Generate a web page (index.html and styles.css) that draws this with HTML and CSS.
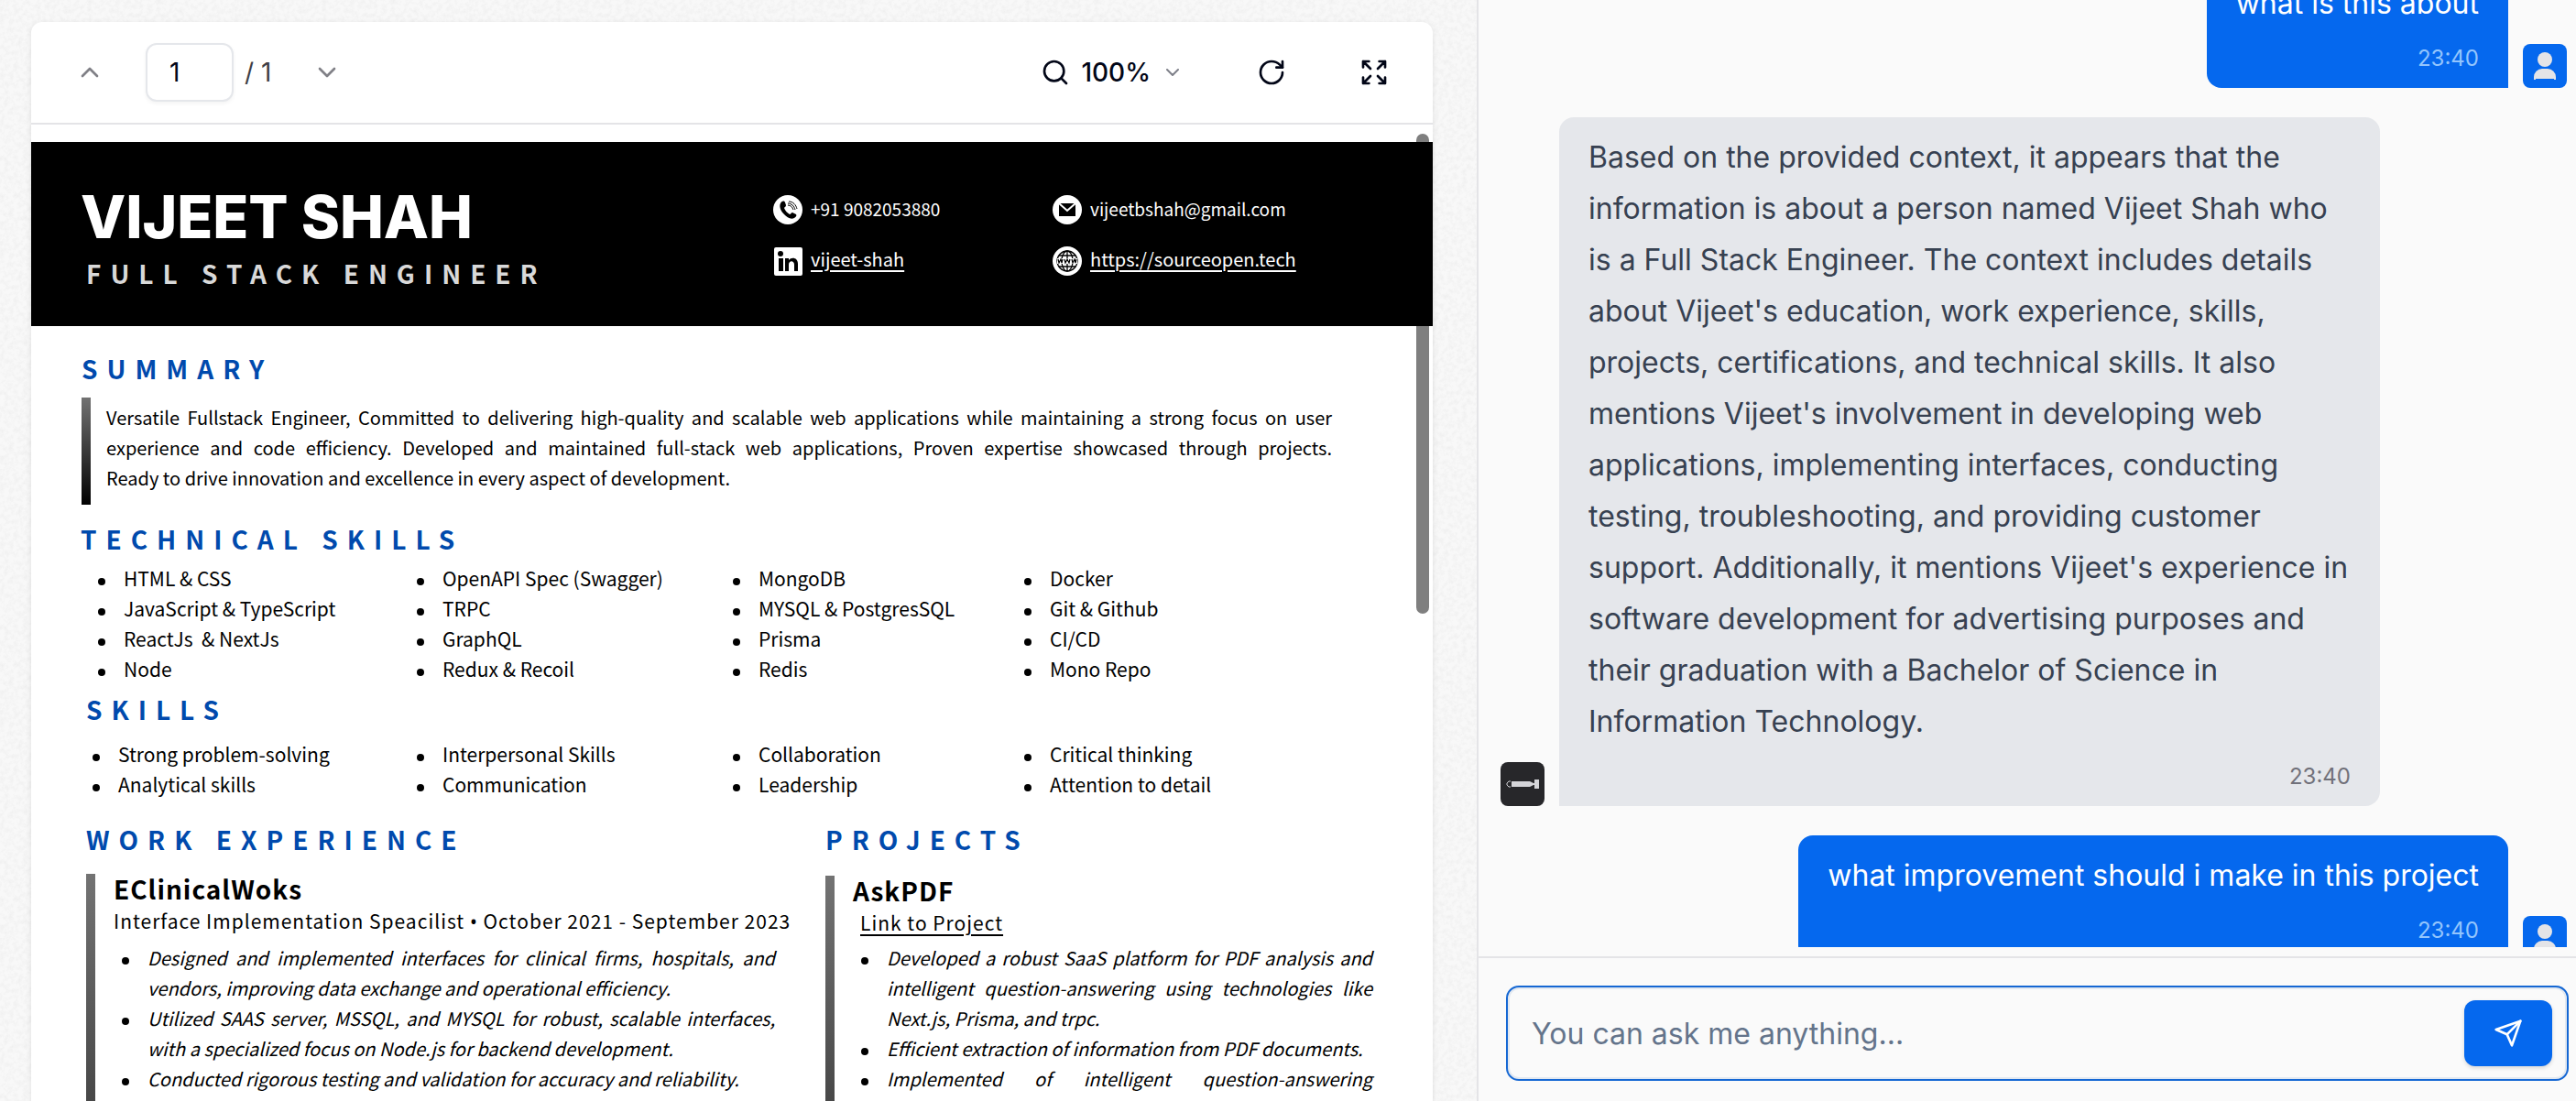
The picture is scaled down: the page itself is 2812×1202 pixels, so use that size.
FILE: index.html
```html
<!DOCTYPE html>
<html lang="en">
<head>
<meta charset="utf-8">
<title>AskPDF</title>
<link rel="stylesheet" href="styles.css">
</head>
<body>
<div class="app">
  <main class="viewer">
    <div class="viewer-card">
      <div class="toolbar">
        <div class="pager">
          <button class="icon-button muted" type="button" aria-label="Previous page"><svg class="icon" viewBox="0 0 24 24"><path d="m18 15-6-6-6 6"/></svg></button>
          <div class="page-field">
            <input class="page-input" id="page" type="text" value="1" aria-label="Page number">
            <label class="page-total" for="page"><span>/</span><span>1</span></label>
          </div>
          <button class="icon-button muted" type="button" aria-label="Next page"><svg class="icon" viewBox="0 0 24 24"><path d="m6 9 6 6 6-6"/></svg></button>
        </div>
        <div class="tools">
          <button class="zoom-button" type="button" aria-label="Zoom">
            <svg class="icon" viewBox="0 0 24 24"><circle cx="11" cy="11" r="8"/><path d="m21 21-4-4"/></svg>
            <span>100%</span>
            <svg class="icon icon-small" viewBox="0 0 24 24"><path d="m6 9 6 6 6-6"/></svg>
          </button>
          <button class="icon-button" type="button" aria-label="Rotate"><svg class="icon" viewBox="0 0 24 24"><path d="M21 12a9 9 0 1 1-9-9c2.52 0 4.93 1 6.74 2.74L21 8"/><path d="M21 3v5h-5"/></svg></button>
          <button class="icon-button" type="button" aria-label="Fullscreen"><svg class="icon" viewBox="0 0 24 24"><path d="m21 21-6-6m6 6v-4.800m0 4.800h-4.800M3 16.200V21m0 0h4.800M3 21l6-6M21 7.800V3m0 0h-4.800M21 3l-6 6M3 7.800V3m0 0h4.800M3 3l6 6"/></svg></button>
        </div>
      </div>
      <div class="document">
        <div class="scroll-thumb"></div>
        <article class="resume">
          <header class="resume-header">
            <div class="identity">
              <h1 class="name">VIJEET SHAH</h1>
              <p class="role">FULL STACK ENGINEER</p>
            </div>
            <ul class="contacts">
              <li class="contact">
                <svg class="badge" viewBox="0 0 32 32"><circle cx="16" cy="16" r="16" fill="#fff"/><path d="M8 9c2-3 4-3 5-1l1 3c0 2-2 2-2 3 1 3 3 5 6 7 1 0 2-2 3-2l4 2c1 1 0 3-2 4-4 2-8-1-11-4S6 13 8 9z" fill="#000"/><path d="M16 11c3 0 5 2 6 5M16 9c4 0 7 3 8 7M17 7c5 0 8 4 9 8" fill="none" stroke="#000" stroke-width="1"/></svg>
                <span>+91 9082053880</span>
              </li>
              <li class="contact">
                <svg class="badge" viewBox="0 0 32 32"><circle cx="16" cy="16" r="16" fill="#fff"/><path d="M7 9h18v14H7z" fill="#000"/><path d="M7 9l9 8 9-8" fill="none" stroke="#fff" stroke-width="2"/></svg>
                <span>vijeetbshah@gmail.com</span>
              </li>
              <li class="contact">
                <svg class="badge" viewBox="0 0 32 32"><rect x="1" y="1" width="31" height="31" rx="2" fill="#fff"/><circle cx="8" cy="8" r="3" fill="#000"/><path d="M6 13h5v14H6zM13 13h4v2c3-4 10-3 10 4v8h-4v-7c0-5-6-5-6 0v7h-4z" fill="#000"/></svg>
                <a href="#linkedin">vijeet-shah</a>
              </li>
              <li class="contact">
                <svg class="badge" viewBox="0 0 32 32"><circle cx="16" cy="16" r="16" fill="#fff"/><g fill="none" stroke="#000" stroke-width="1.300"><circle cx="16" cy="16" r="11"/><ellipse cx="16" cy="16" rx="6" ry="11"/><path d="M16 5v22M7 10h18M7 22h18"/></g><path d="M5 13h22v6H5z" fill="#fff"/><path d="M6 14l1 4 2-4 1 4 1-4M13 14l1 4 2-4 2 4 1-4M21 14l1 4 2-4 1 4 1-4" fill="none" stroke="#000" stroke-width="1.200"/></svg>
                <a href="#site">https://sourceopen.tech</a>
              </li>
            </ul>
          </header>

          <section class="summary">
            <h2 class="heading">SUMMARY</h2>
            <p class="summary-text">Versatile Fullstack Engineer, Committed to delivering high-quality and scalable web applications while maintaining a strong focus on user experience and code efficiency. Developed and maintained full-stack web applications, Proven expertise showcased through projects. Ready&nbsp;to&nbsp;drive innovation and excellence in every aspect of development.</p>
          </section>

          <section class="tech">
            <h2 class="heading">TECHNICAL SKILLS</h2>
            <div class="skill-grid">
              <ul class="bullets"><li>HTML &amp; CSS</li><li>JavaScript &amp; TypeScript</li><li>ReactJs &nbsp;&amp; NextJs</li><li>Node</li></ul>
              <ul class="bullets"><li>OpenAPI Spec (Swagger)</li><li>TRPC</li><li>GraphQL</li><li>Redux &amp; Recoil</li></ul>
              <ul class="bullets"><li>MongoDB</li><li>MYSQL &amp; PostgresSQL</li><li>Prisma</li><li>Redis</li></ul>
              <ul class="bullets"><li>Docker</li><li>Git &amp; Github</li><li>CI/CD</li><li>Mono Repo</li></ul>
            </div>
          </section>

          <section class="soft">
            <h2 class="heading indent">SKILLS</h2>
            <div class="skill-grid">
              <ul class="bullets outdent"><li>Strong problem-solving</li><li>Analytical skills</li></ul>
              <ul class="bullets"><li>Interpersonal Skills</li><li>Communication</li></ul>
              <ul class="bullets"><li>Collaboration</li><li>Leadership</li></ul>
              <ul class="bullets"><li>Critical thinking</li><li>Attention to detail</li></ul>
            </div>
          </section>

          <div class="columns">
            <section class="work">
              <h2 class="heading">WORK EXPERIENCE</h2>
              <div class="entry">
                <h3 class="entry-title">EClinicalWoks</h3>
                <p class="entry-meta">Interface Implementation Speacilist <span class="dot">•</span> October 2021 - September 2023</p>
                <ul class="bullets details">
                  <li>Designed and implemented interfaces for clinical firms, hospitals, and vendors, improving data exchange and operational efficiency.</li>
                  <li>Utilized SAAS server, MSSQL, and MYSQL for robust, scalable interfaces, with a specialized focus on Node.js for backend development.</li>
                  <li>Conducted rigorous testing and validation for accuracy and reliability.</li>
                  <li>Enabled business efforts for ticketing and sales data.</li>
                </ul>
              </div>
            </section>
            <section class="projects">
              <h2 class="heading">PROJECTS</h2>
              <div class="entry">
                <h3 class="entry-title">AskPDF</h3>
                <p class="entry-meta inset"><a href="#project">Link to Project</a></p>
                <ul class="bullets details">
                  <li>Developed a robust SaaS platform for PDF analysis and intelligent question-answering using technologies like Next.js, Prisma, and trpc.</li>
                  <li>Efficient extraction of information from PDF documents.</li>
                  <li>Implemented of intelligent question-answering functionalities&nbsp;for&nbsp;users&nbsp;need.</li>
                </ul>
              </div>
            </section>
          </div>
        </article>
      </div>
    </div>
  </main>

  <aside class="chat">
    <div class="messages">
      <div class="message own">
        <div class="bubble"><p>what is this about</p><time class="time">23:40</time></div>
        <div class="avatar"><svg viewBox="0 0 48 48"><circle cx="24" cy="17" r="8"/><path d="M12 39v-3a9 9 0 0 1 9-9h6a9 9 0 0 1 9 9v3h-2v-1H14v1z"/></svg></div>
      </div>
      <div class="message">
        <div class="avatar dark"><svg viewBox="0 0 48 48"><path d="M12 21h20l4 2h1v-4h5v10h-5v-4h-1l-4 2H12z"/><path d="M11 21H9l-2 2v2l2 2h2" fill="none" stroke="#d4d4d8" stroke-width="1"/></svg></div>
        <div class="bubble"><p>Based on the provided context, it appears that the information is about a person named Vijeet Shah who is a Full Stack Engineer. The context includes details about Vijeet's education, work experience, skills, projects, certifications, and technical skills. It also mentions Vijeet's involvement in developing web applications, implementing interfaces, conducting testing, troubleshooting, and providing customer support. Additionally, it mentions Vijeet's experience in software development for advertising purposes and their graduation with a Bachelor of Science in Information Technology.</p><time class="time">23:40</time></div>
      </div>
      <div class="message own">
        <div class="bubble"><p>what improvement should i make in this project</p><time class="time">23:40</time></div>
        <div class="avatar"><svg viewBox="0 0 48 48"><circle cx="24" cy="17" r="8"/><path d="M12 39v-3a9 9 0 0 1 9-9h6a9 9 0 0 1 9 9v3h-2v-1H14v1z"/></svg></div>
      </div>
    </div>
    <form class="composer">
      <div class="composer-box">
        <input class="composer-input" type="text" placeholder="You can ask me anything..." aria-label="Message">
        <button class="send" type="button" aria-label="Send message"><svg class="icon" viewBox="0 0 24 24"><path d="m22 2-7 20-4-9-9-4Z"/><path d="M22 2 11 13"/></svg></button>
      </div>
    </form>
  </aside>
</div>
</body>
</html>
```

FILE: styles.css
```css
* { box-sizing: border-box; }
body, h1, h2, h3, p, ul { margin: 0; padding: 0; }
ul { list-style: none; }
body { font-family: Inter, "Liberation Sans", sans-serif; color: #020617; background: #fafafa; }
button, input { font: inherit; color: inherit; }
button { border: 0; padding: 0; background: none; }

.app { display: grid; grid-template-columns: minmax(0, 1614fr) minmax(0, 1198fr); grid-template-rows: minmax(0, 1fr); height: 100vh; overflow: hidden; }

.viewer {
  padding: 24px 48px 0 34px;
  border-right: 2px solid #e4e4e7;
  background-color: #f8f8f8;
  background-image: url("data:image/svg+xml,%3Csvg xmlns='http://www.w3.org/2000/svg' width='256' height='256'%3E%3Cfilter id='n'%3E%3CfeTurbulence type='fractalNoise' baseFrequency='.2' numOctaves='3' stitchTiles='stitch'/%3E%3CfeColorMatrix values='0 0 0 0 .5 0 0 0 0 .5 0 0 0 0 .5 .3 0 0 0 -.12'/%3E%3C/filter%3E%3Crect width='256' height='256' filter='url(%23n)'/%3E%3C/svg%3E");
  overflow: hidden;
}
.viewer-card { min-height: 100%; background: #fff; border-radius: 12px 12px 0 0; box-shadow: 0 2px 6px rgba(0, 0, 0, .1); }

.toolbar { display: flex; justify-content: space-between; align-items: center; height: 112px; padding: 0 48px; border-bottom: 2px solid #e4e4e7; font-size: 28px; line-height: 40px; }
.pager, .tools { display: flex; align-items: center; }
.pager { gap: 45px; }
.page-field { display: flex; align-items: center; gap: 12px; }
.page-input { width: 96px; height: 64px; padding: 0 24px; border: 2px solid #e5e7eb; border-radius: 12px; background: #fff; box-shadow: 0 2px 4px rgba(0, 0, 0, .05); }
.page-total { display: flex; gap: 8px; color: #3f3f46; }
.tools { gap: 80px; }
.zoom-button { display: flex; align-items: center; gap: 12px; font-weight: 500; }
.icon-button { display: flex; }
.icon { width: 32px; height: 32px; fill: none; stroke: currentColor; stroke-width: 2; stroke-linecap: round; stroke-linejoin: round; }
.icon-small { width: 24px; height: 24px; opacity: .5; }
.muted { color: #808086; }

.document { position: relative; padding-top: 19px; }
.scroll-thumb { position: absolute; top: 10px; right: 4px; width: 14px; height: 524px; border-radius: 8px; background: #7f7f7f; }
.resume { position: relative; font-family: "Noto Sans CJK SC", "Noto Sans", sans-serif; font-size: 21px; line-height: 33px; color: #000; }

.resume-header { display: grid; grid-template-columns: 810fr 720fr; align-items: start; height: 201px; background: #000; color: #fff; }
.identity { padding: 50px 0 0 54px; }
.name { font: 800 64px/64px Inter, "Liberation Sans", sans-serif; }
.role { padding-left: 6px; margin-top: 9px; font-size: 28px; line-height: 40px; font-weight: 700; letter-spacing: 10px; color: #d9d9d9; }
.contacts { display: grid; grid-template-columns: 305fr 415fr; row-gap: 24px; padding-top: 58px; font-size: 19px; line-height: 30px; }
.contact { display: flex; align-items: flex-start; gap: 9px; }
.contact a { color: inherit; font-size: 20px; line-height: 28px; text-underline-offset: 4px; }
.badge { width: 32px; height: 32px; }

.heading { font-size: 28px; line-height: 40px; font-weight: 700; letter-spacing: 10px; color: #004aad; }
.summary { padding: 26px 110px 0 55px; }
.summary-text { margin-top: 12px; padding: 5px 0 13px 17px; border-left: 10px solid; border-image: linear-gradient(#737373, #000) 1; text-align: justify; font-size: 20px; }
.tech { padding: 17px 0 0 54px; }
.skill-grid { display: grid; grid-template-columns: 348fr 345fr 318fr 465fr; }
.tech .skill-grid { margin-top: 7px; }
.soft { padding: 7px 0 0 54px; }
.soft .skill-grid { margin-top: 13px; }
.indent { padding-left: 6px; }
.bullets li { position: relative; padding-left: 47px; }
.bullets li::before { content: ""; position: absolute; left: 19px; top: 16px; width: 8px; height: 8px; border-radius: 50%; background: #000; }
.bullets.outdent { margin-left: -6px; }

.columns { display: grid; grid-template-columns: 807fr 663fr; padding: 23px 0 0 60px; }
.entry { margin-top: 18px; padding-left: 20px; height: 660px; border-left: 10px solid; border-image: linear-gradient(#737373, #000 ) 1; }
.entry-title { font-size: 28px; line-height: 32px; font-weight: 700; letter-spacing: 1px; }
.entry-meta { margin-top: 3px; line-height: 32px; letter-spacing: 1px; white-space: nowrap; }
.entry-meta a { color: inherit; text-underline-offset: 4px; }
.entry-meta.inset { padding-left: 8px; }
.dot { font-family: "Noto Sans", sans-serif; line-height: 1; }
.details { margin: 8px 55px 0 -10px; font-size: 20px; font-style: italic; text-align: justify; }
.projects .entry { margin-top: 20px; }
.projects .details { margin-top: 6px; margin-right: 66px; }

.chat { display: flex; flex-direction: column; min-height: 0; background: #fafafa; }
.messages { flex: 1; min-height: 0; display: flex; flex-direction: column; gap: 32px; margin-bottom: 10px; padding: 0 10px 0 24px; overflow: hidden; }
.message { display: flex; align-items: flex-end; gap: 16px; flex-shrink: 0; }
.message:first-child { margin-top: -40px; }
.own { justify-content: flex-end; }
.bubble { max-width: 896px; padding: 16px 32px; border-radius: 16px 16px 16px 0; background: #e5e7eb; color: #374151; font-size: 32px; line-height: 56px; }
.own .bubble { background: #0568ee; color: #fff; border-radius: 16px 16px 0 16px; }
.time { display: block; margin-top: 16px; text-align: right; font-size: 24px; line-height: 32px; color: #71717a; }
.own .time { color: #93c5fd; }
.avatar { width: 48px; height: 48px; border-radius: 8px; overflow: hidden; background: #0568ee; fill: #e4e4e7; flex-shrink: 0; }
.avatar.dark { background: #27272a; fill: #d4d4d8; }
.avatar svg { display: block; }

.composer { padding: 30px 8px 22px 30px; border-top: 2px solid #e4e4e7; }
.composer-box { display: flex; align-items: center; gap: 16px; height: 104px; padding: 0 16px 0 26px; border: 2px solid #1567d3; border-radius: 14px; box-shadow: inset 0 0 0 2px #e2e8f0; }
.composer-input { flex: 1; min-width: 0; height: 80px; padding: 0; border: 0; outline: 0; background: none; font-size: 32px; }
.composer-input::placeholder { color: #64748b; opacity: 1; }
.send { display: flex; align-items: center; justify-content: center; width: 96px; height: 72px; border-radius: 12px; background: #0568ee; color: #fff; box-shadow: 0 2px 4px rgba(0, 0, 0, .15); }
```
